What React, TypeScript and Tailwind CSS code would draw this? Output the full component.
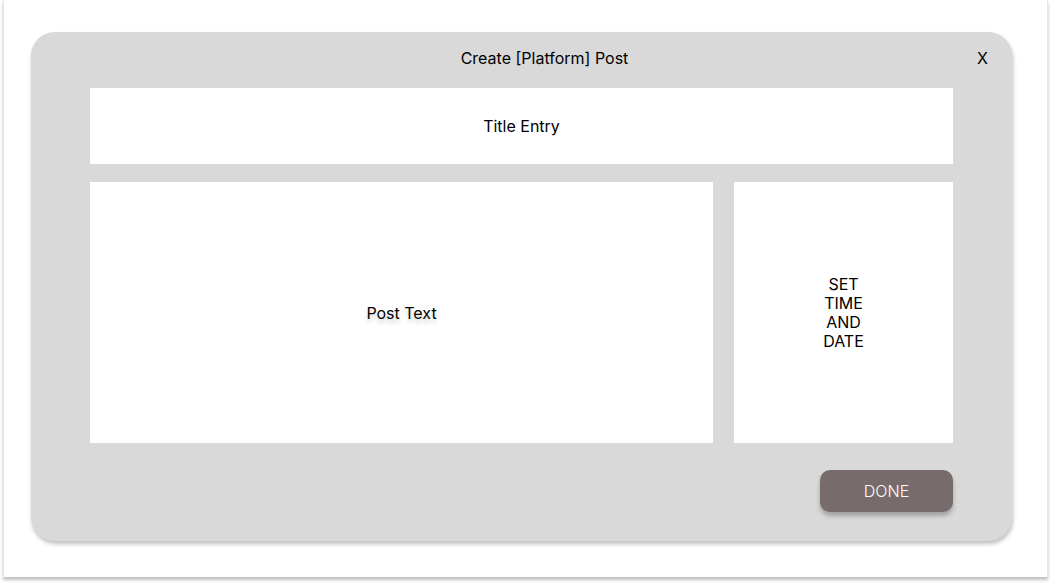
export default function App() {
  return (
    <div className="w-[1053px] h-[585px] bg-white" style={{ fontFamily: 'Inter, "Noto Sans", sans-serif' }}>
      <div className="ml-[3px] w-[1045px] h-[577px] bg-white border-l border-r border-[#e6e6e6] shadow-[0_3px_3px_rgba(0,0,0,0.25)] pt-[32px] pl-[27px]">
        <div className="relative w-[981px] h-[509px] bg-[#d9d9d9] rounded-[24px] shadow-[1px_3px_4px_rgba(0,0,0,0.25)] px-[59px]">
          <div className="h-[56px] pt-[16px] pl-[46px] text-center text-base leading-[20px] text-black">
            Create [Platform] Post
          </div>
          <button className="absolute right-[24px] top-[16px] text-base leading-[20px] text-black">X</button>
          <div className="h-[76px] bg-white flex items-center justify-center text-base text-black">
            Title Entry
          </div>
          <div className="mt-[18px] h-[261px] flex gap-[21px]">
            <div className="flex-1 bg-white flex items-center justify-center text-base text-black [text-shadow:0_4px_4px_rgba(0,0,0,0.2)]">
              Post Text
            </div>
            <div className="w-[219px] bg-white flex items-center justify-center text-center text-base leading-[19px] text-black">
              SET<br />TIME<br />AND<br />DATE
            </div>
          </div>
          <div className="mt-[27px] flex justify-end">
            <button className="w-[133px] h-[42px] rounded-[10px] bg-[#776b6b] text-white text-base font-light leading-[40px] shadow-[0_4px_4px_rgba(0,0,0,0.25)]">
              DONE
            </button>
          </div>
        </div>
      </div>
    </div>
  );
}
